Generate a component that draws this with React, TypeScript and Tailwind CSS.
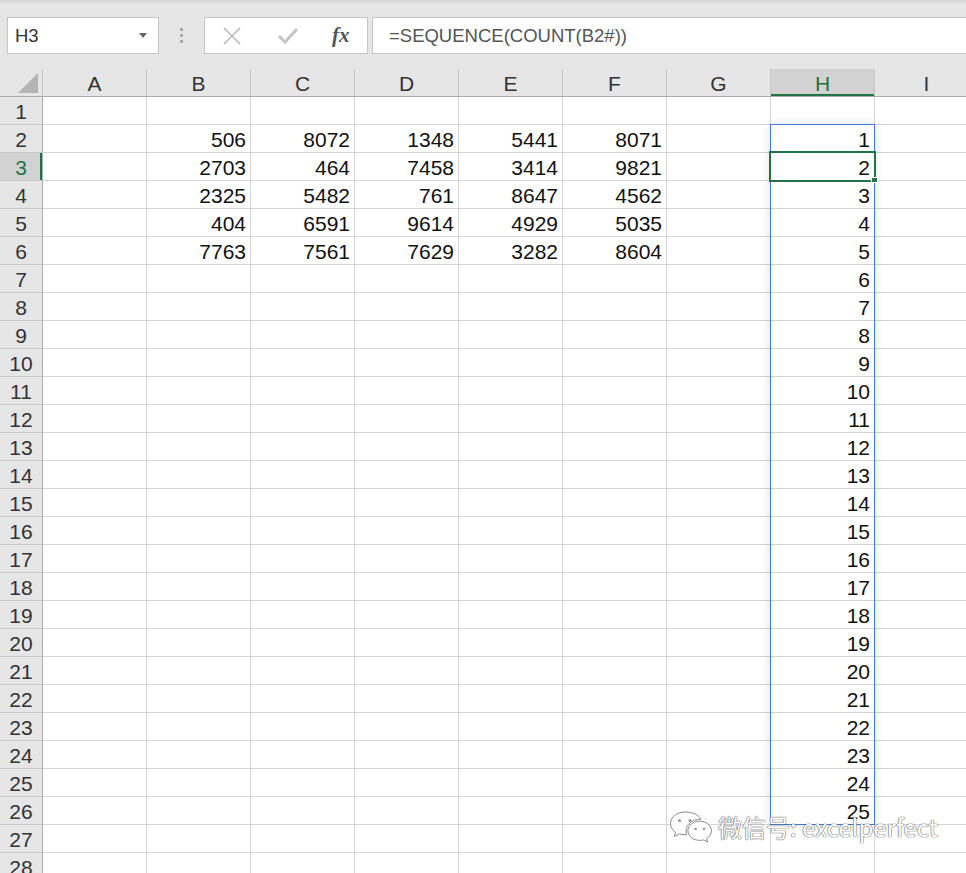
import React from 'react';

const cols = ['A', 'B', 'C', 'D', 'E', 'F', 'G', 'H', 'I'];

const data: Record<number, (number | null)[]> = {
  2: [506, 8072, 1348, 5441, 8071],
  3: [2703, 464, 7458, 3414, 9821],
  4: [2325, 5482, 761, 8647, 4562],
  5: [404, 6591, 9614, 4929, 5035],
  6: [7763, 7561, 7629, 3282, 8604],
};

function cellValue(row: number, col: number) {
  if (col >= 1 && col <= 5 && data[row]) return data[row][col - 1];
  if (col === 7 && row >= 2 && row <= 26) return row - 1;
  return null;
}

function WeChatLogo() {
  return (
    <svg width="46" height="36" viewBox="0 0 46 36" fill="white" stroke="#8a8a8a" strokeWidth="1">
      <path d="M17 3C8.7 3 2.5 8.3 2.5 14.5c0 3.6 2 6.6 5 8.7L6.3 27.5l5-2.6c1.8.5 3.7.8 5.7.8.6 0 1.1 0 1.7-.1-.4-1.2-.6-2.4-.6-3.7 0-6.5 6.2-11.6 13.8-11.6h.9C31.5 6.4 24.8 3 17 3z" />
      <path d="M43.5 21.8c0-5.4-5.4-9.6-11.8-9.6s-11.8 4.2-11.8 9.6 5.4 9.6 11.8 9.6c1.4 0 2.700-.2 3.9-.5l4.2 2.2-1.1-3.6c2.9-1.8 4.8-4.6 4.8-7.7z" />
      <circle cx="11.5" cy="11.5" r="1.6" fill="#9a9a9a" stroke="none" />
      <circle cx="22" cy="11.5" r="1.6" fill="#9a9a9a" stroke="none" />
      <circle cx="27.5" cy="20" r="1.3" fill="#9a9a9a" stroke="none" />
      <circle cx="36" cy="20" r="1.3" fill="#9a9a9a" stroke="none" />
    </svg>
  );
}

export default function App() {
  const rows = Array.from({ length: 28 }, (_, i) => i + 1);

  return (
    <div className="relative w-[966px] h-[873px] overflow-hidden bg-white font-['Liberation_Sans',sans-serif] text-[#222]">
      {/* Formula bar */}
      <div className="h-[69px] bg-gradient-to-b from-[#d6d6d6] via-[#e6e6e6] via-[8%] to-[#e6e6e6] flex items-start pt-[17px]">
        <div className="ml-[7px] w-[152px] h-[37px] bg-white border border-[#c6c6c6] flex items-center justify-between pl-[7px] pr-[11px]">
          <span className="text-[18.5px] text-[#333]">H3</span>
          <svg width="8" height="5" viewBox="0 0 8 5"><path d="M0 0h8L4 5z" fill="#666" /></svg>
        </div>
        <div className="w-[45px] h-[37px] flex flex-col items-center justify-center gap-[3px]">
          <span className="w-[3px] h-[3px] bg-[#a8a8a8]" />
          <span className="w-[3px] h-[3px] bg-[#a8a8a8]" />
          <span className="w-[3px] h-[3px] bg-[#a8a8a8]" />
        </div>
        <div className="w-[164px] h-[37px] bg-white border border-[#c6c6c6] flex items-center">
          <svg className="ml-[17px]" width="20" height="20" viewBox="0 0 20 20" stroke="#b9b9b9" strokeWidth="1.6" fill="none">
            <path d="M2 2l16 16M18 2L2 18" />
          </svg>
          <svg className="ml-[35px]" width="22" height="18" viewBox="0 0 22 18" stroke="#c4c4c4" strokeWidth="3" fill="none">
            <path d="M2 9l6 6L20 2" />
          </svg>
          <span className="ml-[33px] font-['Liberation_Serif',serif] italic font-bold text-[21px] text-[#555] leading-none">fx</span>
        </div>
        <div className="ml-[4px] flex-1 h-[37px] bg-white border border-[#c6c6c6] border-r-0 flex items-center pl-[16px]">
          <span className="text-[18.5px] text-[#555]">=SEQUENCE(COUNT(B2#))</span>
        </div>
      </div>

      {/* Column headers */}
      <div className="flex h-[28px] bg-[#e6e6e6] border-b border-[#ababab]">
        <div className="w-[43px] shrink-0 border-r border-[#c8c8c8] flex items-end justify-end pr-[4px] pb-[3px]">
          <svg width="20" height="20" viewBox="0 0 20 20"><path d="M20 0v20H0z" fill="#b4b4b4" /></svg>
        </div>
        {cols.map(c => (
          <div
            key={c}
            className={`w-[104px] shrink-0 border-r border-[#c8c8c8] flex items-center justify-center pt-[3px] text-[21px] ${c === 'H' ? 'bg-[#d2d2d2] text-[#217346] shadow-[inset_0_-2px_0_#217346]' : 'text-[#333]'}`}
          >
            {c}
          </div>
        ))}
      </div>

      {/* Grid */}
      {rows.map(r => (
        <div key={r} className="flex h-[28px]">
          <div
            className={`w-[43px] shrink-0 border-b border-r border-b-[#c8c8c8] border-r-[#ababab] flex items-center justify-center pt-[3px] text-[21px] ${r === 3 ? 'bg-[#d2d2d2] text-[#217346] shadow-[inset_-2px_0_0_#217346]' : 'bg-[#e6e6e6] text-[#333]'}`}
          >
            {r}
          </div>
          {cols.map((c, ci) => {
            const v = cellValue(r, ci);
            return (
              <div
                key={c}
                className="w-[104px] shrink-0 border-b border-r border-[#d4d4d4] flex items-end justify-end pr-[4px] pb-0 text-[21px] leading-[24px] text-[#111]"
              >
                {v}
              </div>
            );
          })}
        </div>
      ))}

      {/* Spill range + active cell */}
      <div className="absolute left-[770px] top-[124px] w-[105px] h-[701px] border border-[#3d78d8] shadow-[0_0_10px_rgba(0,0,0,0.12)]" />
      <div className="absolute left-[769px] top-[151px] w-[107px] h-[31px] border-2 border-[#217346]" />
      <div className="absolute left-[871px] top-[177px] w-[7px] h-[6px] bg-[#217346] border border-white" />

      {/* Watermark */}
      <div className="absolute left-[668px] top-[809px] flex items-center gap-[4px]">
        <WeChatLogo />
        <span className="font-['Noto_Sans_CJK_SC',sans-serif] text-[24px] text-white [text-shadow:0_0_1px_#666,0_0_1px_#666,0_0_1px_#666]">
          微信号: excelperfect
        </span>
      </div>
    </div>
  );
}
